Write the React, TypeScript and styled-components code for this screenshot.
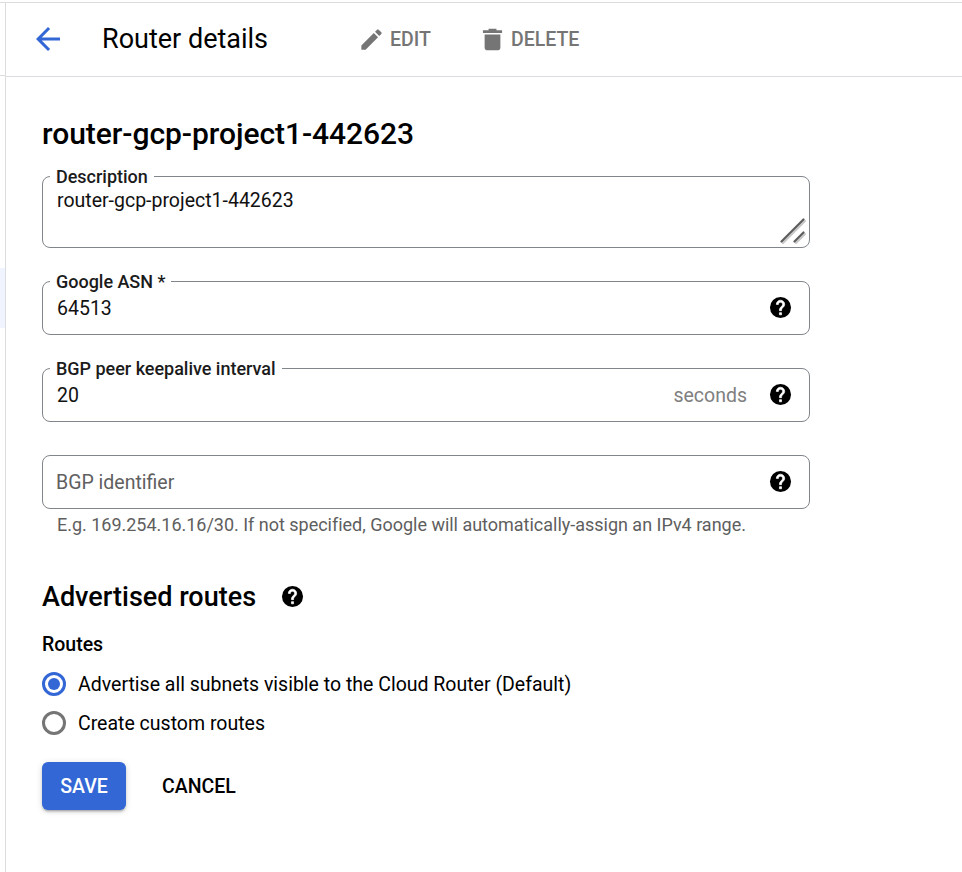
import React from 'react';
import styled, { createGlobalStyle } from 'styled-components';

const GlobalStyle = createGlobalStyle`
  * { box-sizing: border-box; }
  body { margin: 0; background: #fff; font-family: Roboto, 'Liberation Sans', sans-serif; color: #000; }
`;

const Page = styled.div`
  display: flex;
  flex-direction: column;
  height: 872px;
  padding-top: 2px;
  overflow: hidden;
`;

const Frame = styled.div`
  display: flex;
  flex: 1;
  border-top: 1px solid #dadce0;
`;

const Rail = styled.div`
  display: flex;
  flex-direction: column;
  width: 6px;
  border-right: 1px solid #dadce0;
`;

const RailHeader = styled.div`
  height: 73px;
  border-bottom: 1px solid #dadce0;
`;

const RailActive = styled.div`
  height: 60px;
  margin-top: 192px;
  background: #f0f4fe;
`;

const Main = styled.main`
  flex: 1;
`;

const Toolbar = styled.header`
  display: flex;
  align-items: center;
  height: 74px;
  padding: 0 0 1px 24px;
  border-bottom: 1px solid #dadce0;
`;

const BackIcon = styled.svg`
  width: 36px;
  height: 36px;
  fill: #3367d6;
`;

const Title = styled.h1`
  width: 256px;
  margin: 0 0 0 36px;
  font-size: 27px;
  font-weight: 400;
  line-height: 36px;
  white-space: nowrap;
`;

const ToolButton = styled.button<{ $width: number }>`
  display: flex;
  align-items: center;
  gap: 5px;
  width: ${({ $width }) => $width}px;
  height: 28px;
  padding: 0;
  border: 0;
  background: none;
  color: #757575;
  font: 500 19.5px/24px Roboto, sans-serif;
`;

const ToolLabel = styled.span`
  padding-top: 2px;
`;

const ToolIcon = styled.svg`
  flex: none;
  width: 27px;
  height: 27px;
  fill: currentColor;
`;

const Form = styled.form`
  display: flex;
  flex-direction: column;
  width: 804px;
  padding: 39px 0 0 36px;
`;

const RouterName = styled.h2`
  margin: 0 0 24px;
  font-size: 30px;
  font-weight: 500;
  letter-spacing: -0.05px;
  line-height: 36px;
`;

const Field = styled.div<{ $tall?: boolean }>`
  position: relative;
  display: flex;
  align-items: ${({ $tall }) => ($tall ? 'flex-start' : 'center')};
  height: ${({ $tall }) => ($tall ? 72 : 54)}px;
  margin-bottom: 33px;
  padding: ${({ $tall }) => ($tall ? '10px 14px 0' : '0 14px')};
  border: 1px solid #80868b;
  border-radius: 8px;
  font-size: 19.5px;
  line-height: 24px;
`;

const FieldLabel = styled.label`
  position: absolute;
  top: -12px;
  left: 7px;
  padding: 0 6px;
  background: #fff;
  color: #1b1b1b;
  font-size: 18px;
  font-weight: 500;
  letter-spacing: -0.02px;
  line-height: 24px;
  white-space: nowrap;
`;

const Value = styled.span`
  flex: 1;
  padding-top: 2px;
  color: #111;
`;

const Placeholder = styled.span`
  flex: 1;
  padding-top: 2px;
  margin-left: -1px;
  color: #606060;
`;

const Suffix = styled.span`
  margin-right: 21px;
  padding-top: 2px;
  color: #808080;
`;

const HelpSvg = styled.svg`
  flex: none;
  width: 25px;
  height: 25px;
  margin: 0 2px 1px 0;
`;

const ResizeSvg = styled.svg`
  position: absolute;
  right: 3px;
  bottom: 3px;
  width: 26px;
  height: 26px;
`;

const Hint = styled.p`
  margin: -29px 0 0 15px;
  color: #5e5e5e;
  font-size: 18px;
  letter-spacing: -0.015px;
  line-height: 24px;
`;

const SectionHead = styled.div`
  display: flex;
  align-items: center;
  gap: 24px;
  margin-top: 42px;
`;

const SectionTitle = styled.h3`
  margin: 0;
  font-size: 27px;
  font-weight: 500;
  line-height: 36px;
`;

const GroupLabel = styled.div`
  margin: 18px 0 15px;
  font-size: 19.5px;
  font-weight: 500;
  line-height: 24px;
`;

const RadioRow = styled.label`
  display: flex;
  align-items: center;
  gap: 12px;
  height: 24px;
  margin-bottom: 15px;
  font-size: 19.5px;
  line-height: 24px;
`;

const RadioText = styled.span`
  padding-top: 2px;
`;

const Radio = styled.span<{ $on?: boolean }>`
  display: grid;
  place-items: center;
  width: 24px;
  height: 24px;
  border: 3px solid ${({ $on }) => ($on ? '#3367d6' : '#757575')};
  border-radius: 50%;

  &::after {
    content: '';
    width: 12px;
    height: 12px;
    border-radius: 50%;
    background: ${({ $on }) => ($on ? '#3367d6' : 'transparent')};
  }
`;

const Actions = styled.div`
  display: flex;
  gap: 24px;
  margin-top: 12px;
`;

const ActionButton = styled.button<{ $primary?: boolean }>`
  height: 48px;
  width: ${({ $primary }) => ($primary ? 84 : 98)}px;
  padding: 2px 0 0;
  border: 0;
  border-radius: 6px;
  background: ${({ $primary }) => ($primary ? '#3367d6' : 'none')};
  box-shadow: ${({ $primary }) =>
    $primary ? '0 3px 2px -2px rgba(0,0,0,.2), 0 2px 3px rgba(0,0,0,.14), 0 1px 7px rgba(0,0,0,.12)' : 'none'};
  color: ${({ $primary }) => ($primary ? '#fff' : '#000')};
  font: 500 19.5px/24px Roboto, sans-serif;
`;

const HelpIcon = () => (
  <HelpSvg viewBox="0 0 24 24" aria-label="Help">
    <circle cx="12" cy="12" r="10.1" />
    <path
      d="M13 19h-2v-2h2v2zm2.07-7.75l-.9.92C13.45 12.9 13 13.5 13 15h-2v-.5c0-1.1.45-2.1 1.17-2.83l1.24-1.26c.37-.36.59-.86.59-1.41 0-1.1-.9-2-2-2s-2 .9-2 2H8c0-2.21 1.79-4 4-4s4 1.79 4 4c0 .88-.36 1.68-.93 2.25z"
      fill="#fff"
      stroke="#fff"
      strokeWidth=".7"
    />
  </HelpSvg>
);

export default function App() {
  return (
    <Page>
      <GlobalStyle />
      <Frame>
        <Rail>
          <RailHeader />
          <RailActive />
        </Rail>
        <Main>
          <Toolbar>
            <BackIcon viewBox="0 0 24 24">
              <path d="M20 11H7.83l5.59-5.59L12 4l-8 8 8 8 1.41-1.41L7.83 13H20v-2z" />
            </BackIcon>
            <Title>Router details</Title>
            <ToolButton $width={121}>
              <ToolIcon viewBox="0 0 24 24">
                <path d="M3 17.25V21h3.75L17.81 9.94l-3.75-3.75L3 17.25zM20.71 7.04a1 1 0 0 0 0-1.41l-2.34-2.34a1 1 0 0 0-1.41 0l-1.83 1.83 3.75 3.75 1.83-1.83z" />
              </ToolIcon>
              <ToolLabel>EDIT</ToolLabel>
            </ToolButton>
            <ToolButton $width={110}>
              <ToolIcon viewBox="0 0 24 24">
                <path d="M5 7.5h14V19a2.5 2.5 0 0 1-2.5 2.5h-9A2.5 2.5 0 0 1 5 19zM3.5 3.8h5V2.5h7v1.3h5v2.4h-17z" />
              </ToolIcon>
              <ToolLabel>DELETE</ToolLabel>
            </ToolButton>
          </Toolbar>
          <Form>
            <RouterName>router-gcp-project1-442623</RouterName>
            <Field $tall>
              <FieldLabel>Description</FieldLabel>
              <Value>router-gcp-project1-442623</Value>
              <ResizeSvg viewBox="0 0 26 26" fill="none" strokeLinecap="round">
                <path d="M3 25L25 3M16 25l9-9" stroke="#c8c8c8" strokeWidth="2" />
                <path d="M1.5 23.5L23.5 1.5M14.5 23.5l9-9" stroke="#5c5c5c" strokeWidth="2.2" />
              </ResizeSvg>
            </Field>
            <Field>
              <FieldLabel>Google ASN *</FieldLabel>
              <Value>64513</Value>
              <HelpIcon />
            </Field>
            <Field>
              <FieldLabel>BGP peer keepalive interval</FieldLabel>
              <Value>20</Value>
              <Suffix>seconds</Suffix>
              <HelpIcon />
            </Field>
            <Field>
              <Placeholder>BGP identifier</Placeholder>
              <HelpIcon />
            </Field>
            <Hint>E.g. 169.254.16.16/30. If not specified, Google will automatically-assign an IPv4 range.</Hint>
            <SectionHead>
              <SectionTitle>Advertised routes</SectionTitle>
              <HelpIcon />
            </SectionHead>
            <GroupLabel>Routes</GroupLabel>
            <RadioRow>
              <Radio $on />
              <RadioText>Advertise all subnets visible to the Cloud Router (Default)</RadioText>
            </RadioRow>
            <RadioRow>
              <Radio />
              <RadioText>Create custom routes</RadioText>
            </RadioRow>
            <Actions>
              <ActionButton type="button" $primary>SAVE</ActionButton>
              <ActionButton type="button">CANCEL</ActionButton>
            </Actions>
          </Form>
        </Main>
      </Frame>
    </Page>
  );
}
